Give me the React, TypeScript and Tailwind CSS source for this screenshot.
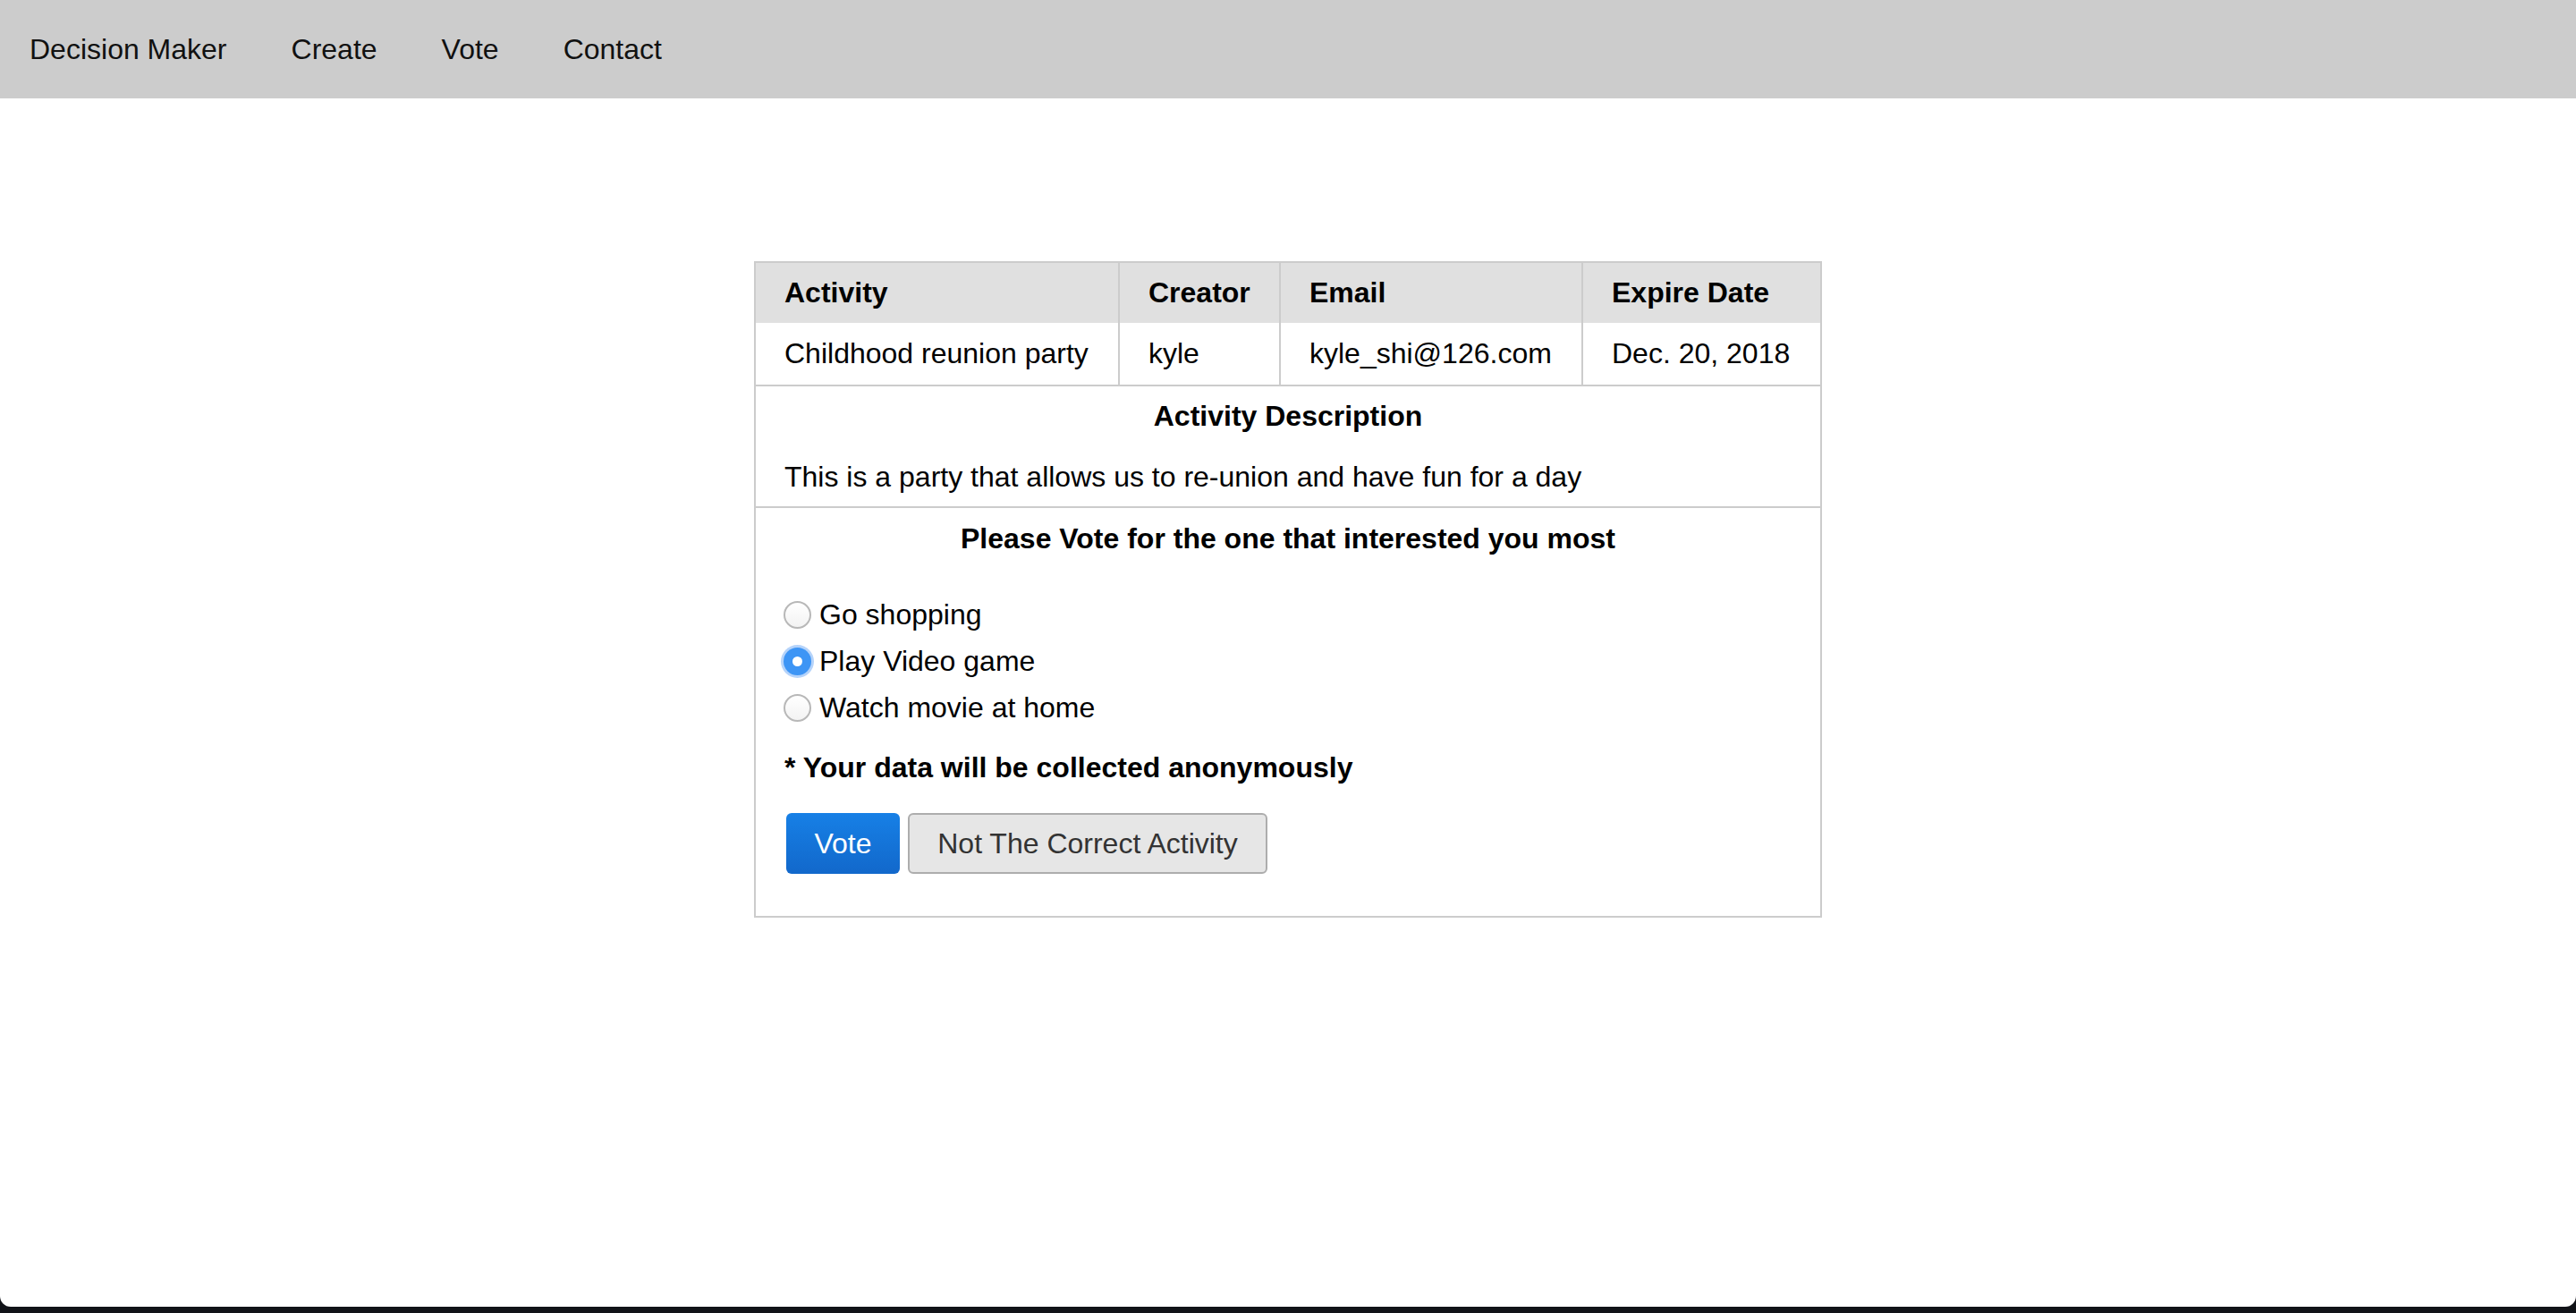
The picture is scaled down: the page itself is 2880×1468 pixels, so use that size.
import { useState } from 'react'

const options = ['Go shopping', 'Play Video game', 'Watch movie at home']

function Radio({ checked }: { checked: boolean }) {
  if (checked) {
    return (
      <span className="flex h-[31px] w-[31px] shrink-0 items-center justify-center rounded-full bg-[#3d95f5] shadow-[0_0_0_3px_rgba(120,175,245,0.55)]">
        <span className="h-[11px] w-[11px] rounded-full bg-white" />
      </span>
    )
  }
  return <span className="h-[31px] w-[31px] shrink-0 rounded-full border-2 border-[#b8b8b8] bg-gradient-to-b from-white to-[#f3f3f3]" />
}

export default function App() {
  const [choice, setChoice] = useState(1)

  return (
    <div className="h-[1468px] bg-[#111318]" style={{ fontFamily: '"Liberation Sans", Arial, Helvetica, sans-serif' }}>
      <div className="flex h-[1461px] flex-col overflow-hidden rounded-b-[12px] bg-white text-black">
        {/* Nav */}
        <nav className="flex h-[110px] shrink-0 items-center gap-[72px] bg-[#cccccc] pl-[33px] text-[32px] leading-[37px] text-[#111]">
          <a>Decision Maker</a>
          <a>Create</a>
          <a>Vote</a>
          <a>Contact</a>
        </nav>

        <table className="mx-auto mt-[182px] w-[1192px] table-fixed border-collapse border-2 border-[#cccccc] text-[32px] leading-[37px]">
          <colgroup>
            <col className="w-[407px]" />
            <col className="w-[180px]" />
            <col className="w-[338px]" />
            <col className="w-[267px]" />
          </colgroup>
          <thead>
            <tr className="bg-[#e0e0e0]">
              <th className="border-x-2 border-[#cccccc] px-[32px] py-[15px] text-left font-bold">Activity</th>
              <th className="border-x-2 border-[#cccccc] px-[32px] py-[15px] text-left font-bold whitespace-nowrap">Creator</th>
              <th className="border-x-2 border-[#cccccc] px-[32px] py-[15px] text-left font-bold">Email</th>
              <th className="border-x-2 border-[#cccccc] px-[32px] py-[15px] text-left font-bold">Expire Date</th>
            </tr>
          </thead>
          <tbody>
            <tr>
              <td className="border-x-2 border-b-2 border-[#cccccc] px-[32px] py-[16px] whitespace-nowrap">Childhood reunion party</td>
              <td className="border-x-2 border-b-2 border-[#cccccc] px-[32px] py-[16px]">kyle</td>
              <td className="border-x-2 border-b-2 border-[#cccccc] px-[32px] py-[16px]">kyle_shi@126.com</td>
              <td className="border-x-2 border-b-2 border-[#cccccc] px-[32px] py-[16px] whitespace-nowrap">Dec. 20, 2018</td>
            </tr>
            <tr>
              <td colSpan={4} className="border-b-2 border-[#cccccc] px-[32px] pt-[15px] pb-[14px]">
                <div className="text-center font-bold">Activity Description</div>
                <p className="mt-[31px]">This is a party that allows us to re-union and have fun for a day</p>
              </td>
            </tr>
            <tr>
              <td colSpan={4} className="px-[32px] pt-[16px] pb-[47px]">
                <div className="text-center font-bold">Please Vote for the one that interested you most</div>
                <div className="mt-[40px] flex flex-col">
                  {options.map((o, i) => (
                    <label key={o} onClick={() => setChoice(i)} className="flex h-[52px] cursor-pointer items-center gap-[9px] -ml-[1px]">
                      <Radio checked={choice === i} />
                      <span>{o}</span>
                    </label>
                  ))}
                </div>
                <div className="mt-[23px] font-bold">* Your data will be collected anonymously</div>
                <div className="mt-[32px] ml-[2px] flex gap-[9px]">
                  <button className="h-[68px] w-[127px] rounded-[6px] bg-gradient-to-b from-[#1780e6] to-[#1268cb] text-white">Vote</button>
                  <button className="h-[68px] w-[402px] rounded-[6px] border-2 border-[#adadad] bg-[#e6e6e6] text-[#333]">Not The Correct Activity</button>
                </div>
              </td>
            </tr>
          </tbody>
        </table>
      </div>
    </div>
  )
}
